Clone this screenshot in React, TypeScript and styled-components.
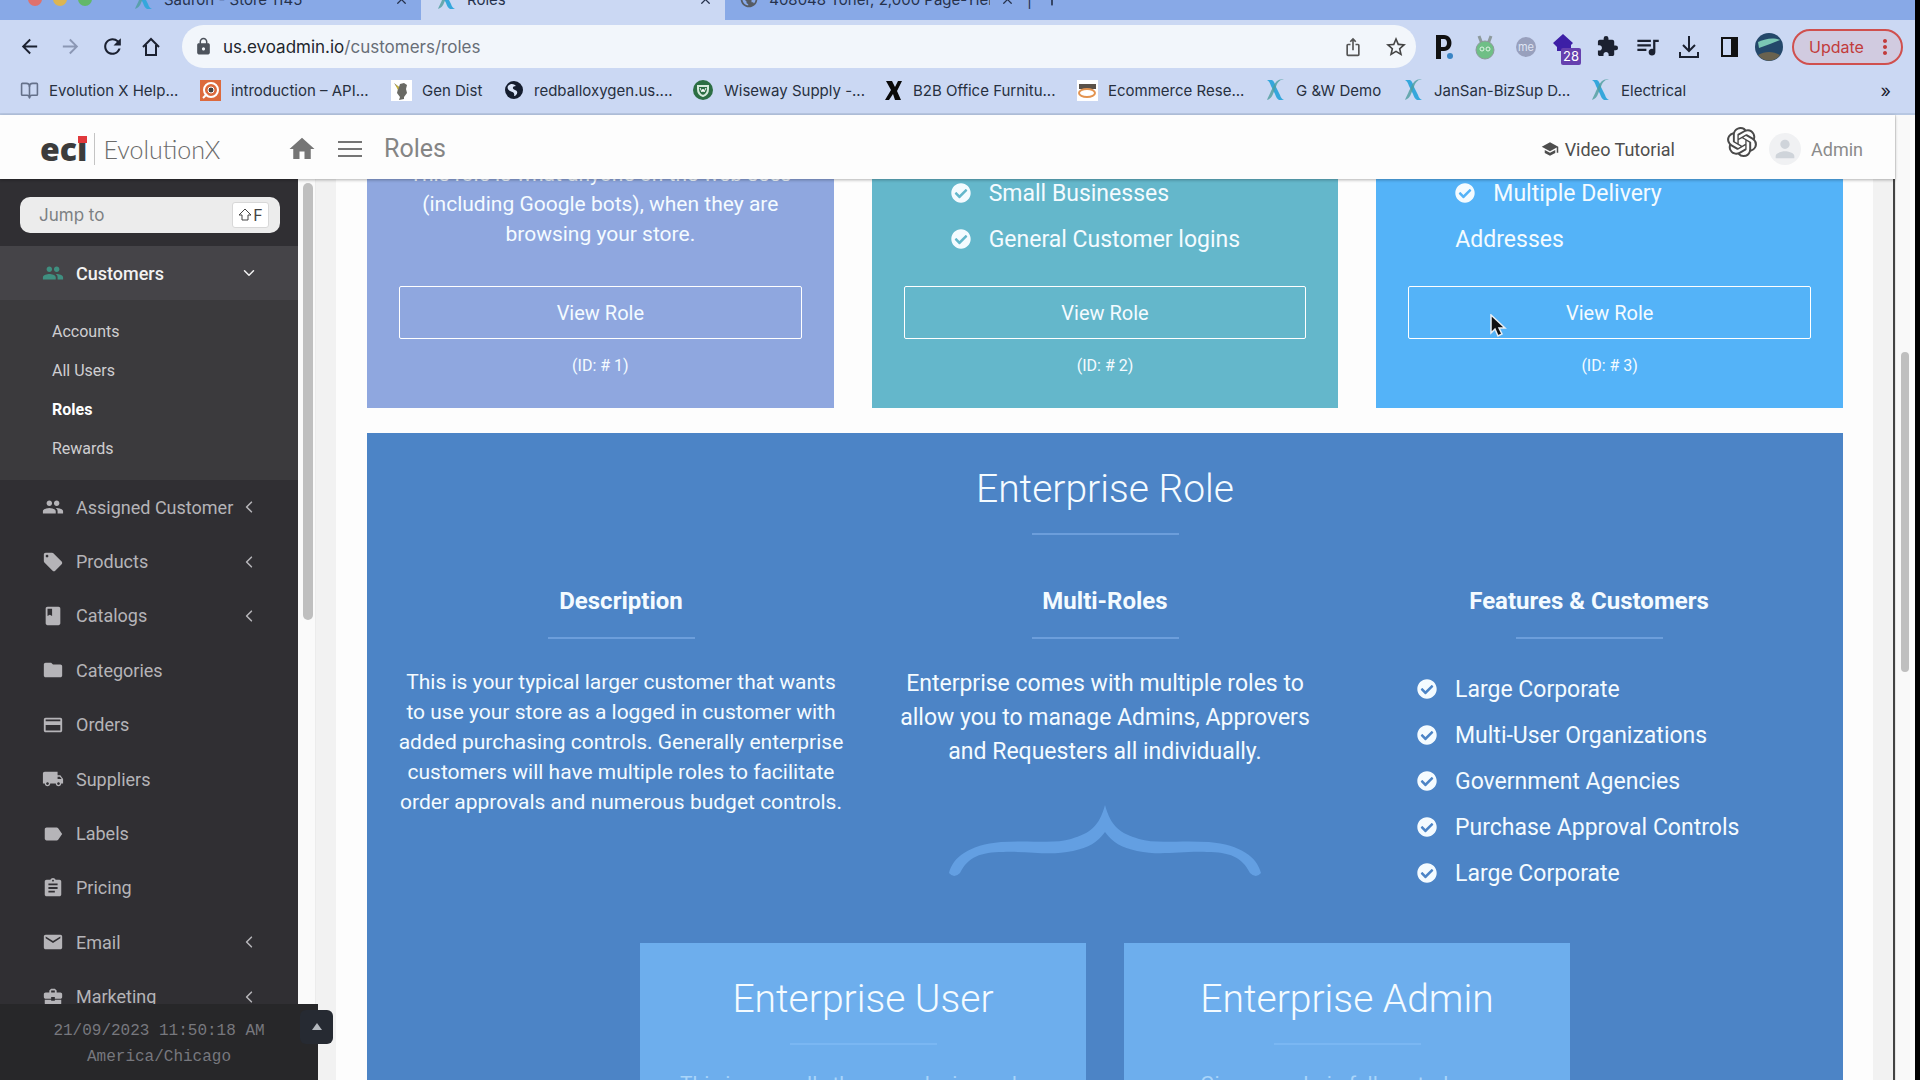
import React from "react";
import styled, { createGlobalStyle } from "styled-components";
import {
  MdArrowBack, MdArrowForward, MdRefresh, MdLock, MdIosShare, MdStarBorder,
  MdExtension, MdQueueMusic, MdMoreVert, MdHome, MdSchool, MdPeople,
  MdLocalOffer, MdClass, MdFolder, MdPayment, MdLocalShipping, MdLabel, MdAssignment, MdMail,
  MdBusinessCenter, MdPerson, MdPublic,
} from "react-icons/md";
import { FaCheckCircle } from "react-icons/fa";
import { SiOpenai } from "react-icons/si";
import { ChevronDown, ChevronLeft, BookOpen, X, Plus } from "lucide-react";

const Global = createGlobalStyle`
  * { box-sizing: border-box; }
  body { margin: 0; background: #000; }
  button, input { font-family: inherit; }
  a { color: inherit; text-decoration: none; }
  h1, h2, h3, p, ul { margin: 0; padding: 0; }
  ul { list-style: none; }
`;

const ui = `"Inter", "Liberation Sans", sans-serif`;
const body = `Roboto, "Noto Sans", sans-serif`;

const Screen = styled.div`
  height: 100vh;
  padding-right: 5px;
  display: flex;
  flex-direction: column;
  overflow: hidden;
  background: #000;
  font-family: ${body};
`;

/* Browser chrome */
const TabStrip = styled.div`
  height: 20px;
  flex: none;
  display: flex;
  align-items: flex-end;
  overflow: hidden;
  background: #88a9e7;
  font-family: ${ui};
`;
const Lights = styled.div`
  height: 42px;
  padding-left: 28px;
  width: 134px;
  display: flex;
  align-items: center;
  gap: 11px;
`;
const Light = styled.span<{ $c: string }>`
  width: 14px;
  height: 14px;
  border-radius: 50%;
  background: ${(p) => p.$c};
`;
const Tab = styled.div<{ $w: number; $active?: boolean }>`
  width: ${(p) => p.$w}px;
  height: 42px;
  padding: 0 12px 0 ${(p) => (p.$active ? 16 : 0)}px;
  display: flex;
  align-items: center;
  gap: 10px;
  font-size: 15px;
  color: #26324c;
  background: ${(p) => (p.$active ? "#cbd8f3" : "transparent")};
  span { flex: 1; white-space: nowrap; overflow: hidden; }
`;
const Toolbar = styled.div`
  height: 53px;
  flex: none;
  padding: 0 12px 0 18px;
  display: flex;
  align-items: center;
  background: #cbd8f3;
  font-family: ${ui};
`;
const IconButton = styled.button<{ $dim?: boolean; $w?: number }>`
  width: ${(p) => p.$w ?? 41}px;
  height: 36px;
  padding: 0;
  border: 0;
  display: flex;
  flex: none;
  align-items: center;
  justify-content: ${(p) => (p.$w ? "center" : "flex-start")};
  background: transparent;
  color: ${(p) => (p.$dim ? "#8b97b4" : "#1b2130")};
`;
const Address = styled.label`
  flex: 1;
  height: 43px;
  margin-right: 8px;
  padding: 0 2px 0 12px;
  display: flex;
  align-items: center;
  gap: 10px;
  border-radius: 22px;
  background: #f2f6fb;
  color: #4d535c;
`;
const Url = styled.a`
  flex: 1;
  font-size: 17px;
  color: #686e77;
  b { font-weight: 400; color: #22262d; }
`;
const Extensions = styled.div`
  display: flex;
  margin-right: 3px;
`;
const Update = styled.button`
  width: 111px;
  height: 36px;
  padding: 0 4px 0 15px;
  display: flex;
  align-items: center;
  justify-content: space-between;
  border: 2px solid #d0504e;
  border-radius: 18px;
  background: #d1cbe0;
  color: #c23b3b;
  font-size: 16px;
`;
const Bookmarks = styled.nav`
  height: 42px;
  flex: none;
  padding: 0 24px 6px 20px;
  display: flex;
  align-items: center;
  background: #cbd8f3;
  border-bottom: 2px solid #b7c7e2;
  font-family: ${ui};
  font-size: 15px;
  color: #27303f;
`;
const Bookmark = styled.a<{ $w: number }>`
  width: ${(p) => p.$w}px;
  flex: none;
  display: flex;
  align-items: center;
  gap: 10px;
  white-space: nowrap;
  svg { flex: none; }
`;
const More = styled.button`
  margin-left: auto;
  padding: 0;
  border: 0;
  background: none;
  font-size: 18px;
  color: #1b2130;
`;

/* Application */
const Viewport = styled.div`
  flex: 1;
  min-height: 0;
  display: grid;
  grid-template-columns: 1fr 20px;
`;
const Page = styled.div`
  min-width: 0;
  min-height: 0;
  display: grid;
  grid-template-rows: 64px 1fr;
  background: #fdfdfd;
`;
const PageTrack = styled.div`
  padding: 237px 6px 0 5px;
  background: #f9f9f9;
  border-left: 1px solid #e6e6e6;
`;
const Thumb = styled.div<{ $h: number }>`
  height: ${(p) => p.$h}px;
  border-radius: 5px;
  background: #bfbfbf;
`;
const Header = styled.header`
  display: flex;
  align-items: center;
  padding: 4px 32px 0 40px;
  box-shadow: 0 1px 3px rgba(0, 0, 0, 0.3);
  z-index: 1;
  color: #777;
`;
const Logo = styled.a`
  width: 247px;
  display: flex;
  align-items: center;
  color: #6b6b6b;
  font-family: Lato, sans-serif;
  font-size: 25px;
  font-weight: 300;
  line-height: 36px;
`;
const LogoMark = styled.strong`
  position: relative;
  margin-right: 8px;
  padding-right: 7px;
  border-right: 1px solid #c4c4c4;
  font-family: "Open Sans", sans-serif;
  font-size: 32px;
  font-weight: 800;
  line-height: 32px;
  color: #3c3c3c;
`;
const LogoDot = styled.i`
  position: absolute;
  right: 7px;
  top: 3px;
  width: 9px;
  height: 7px;
  background: #e0393c;
`;
const HeaderButton = styled.button<{ $w: number }>`
  width: ${(p) => p.$w}px;
  padding: 0;
  border: 0;
  background: none;
  color: #757575;
  display: flex;
`;
const PageTitle = styled.h1`
  flex: 1;
  font-size: 25px;
  line-height: 28px;
  font-weight: 400;
  color: #858585;
`;
const HeaderLink = styled.a`
  display: flex;
  align-items: center;
  gap: 6px;
  margin-right: 52px;
  font-size: 18px;
  color: #4e4e4e;
`;
const Assistant = styled.a`
  align-self: flex-start;
  height: 46px;
  display: flex;
  align-items: center;
  color: #4a4a4a;
`;
const Account = styled.a`
  display: flex;
  align-items: center;
  gap: 10px;
  margin-left: 12px;
  font-size: 18px;
  color: #8b8b8b;
`;
const Avatar = styled.span`
  width: 32px;
  height: 32px;
  display: flex;
  align-items: center;
  justify-content: center;
  border-radius: 50%;
  background: #f0f1f3;
  color: #cfd4da;
`;
const Columns = styled.div`
  min-height: 0;
  display: grid;
  grid-template-columns: 298px 18px 1fr;
`;
const Sidebar = styled.aside`
  position: relative;
  min-height: 0;
  display: flex;
  flex-direction: column;
  background: #302f33;
  color: #b5b4b8;
  font-size: 18px;
`;
const Jump = styled.label`
  height: 36px;
  margin: 18px 18px 13px 20px;
  padding: 0 11px 0 19px;
  display: flex;
  align-items: center;
  flex: none;
  border-radius: 10px;
  background: #ececec;
  font-family: ${ui};
  input {
    flex: 1;
    min-width: 0;
    padding: 0;
    border: 0;
    outline: 0;
    background: none;
    font-size: 17px;
  }
  input::placeholder { color: #7c8083; opacity: 1; }
  kbd {
    width: 37px;
    height: 26px;
    display: flex;
    align-items: center;
    justify-content: center;
    gap: 1px;
    border: 1px solid #d8d8d8;
    border-radius: 3px;
    background: #fff;
    font-family: inherit;
    font-size: 16px;
    color: #444;
  }
`;
const Item = styled.a<{ $open?: boolean }>`
  min-height: ${(p) => (p.$open ? 54 : 0)}px;
  padding: 0 40px 0 42px;
  display: flex;
  align-items: center;
  gap: 12px;
  background: ${(p) => (p.$open ? "#454448" : "transparent")};
  color: ${(p) => (p.$open ? "#f2f2f2" : "inherit")};
  font-weight: ${(p) => (p.$open ? 500 : 400)};
  > svg { flex: none; }
  > svg:first-child { color: ${(p) => (p.$open ? "#3f8f80" : "#b5b4b8")}; }
  span { flex: 1; min-width: 0; white-space: nowrap; }
`;
const SubMenu = styled.ul`
  padding: 12px 0 12px 52px;
  background: #3b3a3d;
`;
const SubItem = styled.li<{ $on?: boolean }>`
  font-size: 16px;
  line-height: 39px;
  font-weight: ${(p) => (p.$on ? 700 : 400)};
  color: ${(p) => (p.$on ? "#fff" : "#cfced1")};
`;
const Menu = styled.nav`
  flex: 1;
  min-height: 0;
  padding-bottom: 56px;
  display: grid;
  grid-auto-rows: 1fr;
  ${Item} { padding-right: 47px; }
`;
const Clock = styled.footer`
  position: absolute;
  left: 0;
  right: -20px;
  bottom: 0;
  height: 76px;
  padding: 14px 0;
  background: #272729;
  color: #77787e;
  font: 16px/26px "Liberation Mono", monospace;
  text-align: center;
  z-index: 2;
`;
const ClockToggle = styled.button`
  position: absolute;
  right: -15px;
  top: 6px;
  width: 33px;
  height: 34px;
  padding: 0;
  border: 0;
  border-radius: 6px;
  background: #262a32;
  color: #b4b8be;
`;
const SideTrack = styled.div`
  padding: 4px 2px 0 5px;
  background: #fafafa;
  border-right: 1px solid #ececec;
`;
const Main = styled.main`
  min-width: 0;
  min-height: 0;
  padding: 0 20px;
  overflow: hidden;
  background: #f2f2f2;
  border-right: 2px solid #444;
`;
const Sheet = styled.div`
  min-height: 100%;
  padding: 0 30px 0 31px;
  background: #fdfdfd;
  color: #f4fbff;
`;
const Cards = styled.div`
  height: 229px;
  margin-bottom: 25px;
  display: grid;
  grid-template-columns: repeat(3, 1fr);
  gap: 38px;
`;
const Card = styled.section<{ $bg: string }>`
  min-width: 0;
  padding: 0 32px 28px;
  display: flex;
  flex-direction: column;
  justify-content: flex-end;
  overflow: hidden;
  background: ${(p) => p.$bg};
`;
const Copy = styled.p<{ $big?: boolean }>`
  font-size: ${(p) => (p.$big ? 23 : 21)}px;
  line-height: ${(p) => (p.$big ? 34 : 30)}px;
  text-align: center;
  white-space: nowrap;
`;
const CardCopy = styled(Copy)`
  margin-bottom: 37px;
`;
const Ticks = styled.ul`
  font-size: 23px;
  line-height: 46px;
  margin: 0 0 23px 47px;
  svg { margin-right: 18px; vertical-align: -2px; }
`;
const ViewRole = styled.button`
  position: relative;
  height: 53px;
  flex: none;
  border: 1px solid #fff;
  border-radius: 2px;
  background: transparent;
  color: inherit;
  font-size: 20px;
`;
const Pointer = styled.svg`
  position: absolute;
  left: 80px;
  top: 27px;
`;
const RoleId = styled.p`
  margin-top: 13px;
  font-size: 16px;
  line-height: 28px;
  text-align: center;
`;
const Panel = styled.section`
  padding: 30px 12px 0;
  background: #4c84c6;
`;
const Title = styled.h2`
  font-size: 39px;
  font-weight: 300;
  line-height: 52px;
  text-align: center;
`;
const Rule = styled.hr<{ $c?: string }>`
  width: 147px;
  height: 2px;
  margin: 18px auto 0;
  border: 0;
  background: ${(p) => p.$c ?? "#6c9edb"};
`;
const Thirds = styled.div`
  height: 408px;
  padding-top: 48px;
  display: grid;
  grid-template-columns: repeat(3, 1fr);
`;
const Heading = styled.h3`
  font-size: 24px;
  font-weight: 700;
  line-height: 36px;
  text-align: center;
`;
const Body = styled.div`
  margin-top: 28px;
`;
const PanelTicks = styled(Ticks)`
  margin: 0 0 0 70px;
`;
const Brace = styled.svg`
  display: block;
  margin: 36px auto 0;
`;
const Roles = styled.div`
  padding: 0 261px;
  display: grid;
  grid-template-columns: 1fr 1fr;
  gap: 38px;
`;
const Role = styled.section`
  padding: 30px 0 0;
  background: #6daeed;
`;
const RoleCopy = styled.p`
  margin-top: 22px;
  font-size: 21px;
  line-height: 34px;
  text-align: center;
  color: #a9d5fa;
`;

const EvoX = () => (
  <svg width="20" height="24" viewBox="0 0 20 24" aria-hidden="true">
    <path d="M1 2h5c2 1 3 4 4 7l4 8c1 3 2 4 4 5h-5c-2-1-3-3-4-6L5 8C4 5 3 3 1 2z" fill="#35a7dc" />
    <path d="M18 1c-5 1-7 4-8 8l-3 7c-1 3-3 5-6 6 1-3 3-6 4-9l3-6c2-4 5-6 10-6z" fill="#4d9d9e" opacity=".8" />
  </svg>
);

const bookmarks: [string, React.ReactNode, number][] = [
  ["Evolution X Help...", <BookOpen size={19} color="#65718a" />, 180],
  ["introduction – API...", (
    <svg width="21" height="21" viewBox="0 0 21 21"><path d="M0 0h21v21H0z" fill="#dc6a3d" /><circle cx="11" cy="10" r="7" fill="none" stroke="#fff" strokeWidth="2" /><circle cx="11" cy="10" r="3" fill="#444" stroke="#fff" /><path d="M3 18l4-4" stroke="#fff" strokeWidth="2" /></svg>
  ), 191],
  ["Gen Dist", (
    <svg width="21" height="21" viewBox="0 0 21 21"><path d="M0 0h21v21H0z" fill="#fff" /><path d="M3 3l5 4 1-3 4-1 3 2-1 4 1 4-3 4v2l-5 1 1-3-3-4 1-4z" fill="#6a6a64" /><path d="M4 4l4 3-1 3z" fill="#c8b33a" /></svg>
  ), 113],
  ["redballoxygen.us....", (
    <svg width="20" height="20" viewBox="0 0 20 20"><circle cx="10" cy="10" r="9" fill="#151d2e" /><path d="M4 6c3-3 6-2 8 0-4 0-4 3-1 4 4 1 2 6-1 6 1-3-1-4-4-5-2-1-3-3-2-5z" fill="#dbe5f8" /></svg>
  ), 189],
  ["Wiseway Supply -...", (
    <svg width="21" height="21" viewBox="0 0 21 21"><circle cx="10" cy="10" r="10" fill="#2c6e43" /><path d="M5 6h10v3c0 3-2 6-5 7-3-1-5-4-5-7z" fill="none" stroke="#d6eadc" strokeWidth="2" /><path d="M7 8l2 4 1-3 1 3 2-4" fill="none" stroke="#fff" /></svg>
  ), 192],
  ["B2B Office Furnitu...", (
    <svg width="18" height="21" viewBox="0 0 18 21"><path d="M1 1h6l3 6 3-6h4l-5 10 4 9h-6l-2-6-4 6H0l6-10z" fill="#0a0a0a" /></svg>
  ), 192],
  ["Ecommerce Rese...", (
    <svg width="21" height="21" viewBox="0 0 21 21"><path d="M0 0h21v21H0z" fill="#fff" /><path d="M2 4h17v5H2z" fill="#5a5148" /><ellipse cx="10" cy="13" rx="8" ry="4" fill="none" stroke="#e3934f" strokeWidth="2" /></svg>
  ), 189],
  ["G &W Demo", <EvoX />, 138],
  ["JanSan-BizSup D...", <EvoX />, 187],
  ["Electrical", <EvoX />, 120],
];

const menu: [string, React.ReactNode, boolean][] = [
  ["Assigned Customer", <MdPeople size={22} />, true],
  ["Products", <MdLocalOffer size={22} />, true],
  ["Catalogs", <MdClass size={22} />, true],
  ["Categories", <MdFolder size={22} />, false],
  ["Orders", <MdPayment size={22} />, false],
  ["Suppliers", <MdLocalShipping size={22} />, false],
  ["Labels", <MdLabel size={22} />, false],
  ["Pricing", <MdAssignment size={22} />, false],
  ["Email", <MdMail size={22} />, true],
  ["Marketing", <MdBusinessCenter size={22} />, true],
];

const Tick = ({ children }: { children: React.ReactNode }) => (
  <li><FaCheckCircle size={20} />{children}</li>
);

export default function App() {
  return (
    <Screen>
      <Global />
      <TabStrip>
        <Lights><Light $c="#e0716c" /><Light $c="#dcb553" /><Light $c="#62b869" /></Lights>
        <Tab $w={287}><EvoX /><span>Sauron - Store 1145</span><X size={15} /></Tab>
        <Tab $w={304} $active><EvoX /><span>Roles</span><X size={15} /></Tab>
        <Tab $w={302}>&nbsp;<MdPublic size={20} color="#555b63" /><span>408048 Toner, 2,000 Page-Yield</span><X size={15} /></Tab>
        <Tab $w={60}>|<Plus size={20} /></Tab>
      </TabStrip>
      <Toolbar>
        <IconButton aria-label="Back"><MdArrowBack size={23} /></IconButton>
        <IconButton aria-label="Forward" $dim><MdArrowForward size={23} /></IconButton>
        <IconButton aria-label="Reload"><MdRefresh size={25} /></IconButton>
        <IconButton aria-label="Home">
          <svg width="20" height="22" viewBox="0 0 20 22" fill="none" stroke="currentColor" strokeWidth="2"><path d="M2 11l8-8 8 8M5 9v10h10V9" /></svg>
        </IconButton>
        <Address>
          <MdLock size={19} />
          <Url href="#"><b>us.evoadmin.io</b>/customers/roles</Url>
          <IconButton aria-label="Share" $w={30}><MdIosShare size={20} color="#555" /></IconButton>
          <IconButton aria-label="Bookmark" $w={36}><MdStarBorder size={24} color="#444" /></IconButton>
        </Address>
        <Extensions>
          <IconButton aria-label="P" $w={40}>
            <svg width="20" height="26" viewBox="0 0 20 26"><path d="M2 1h8c10 0 10 16 0 16H7v8H2zM7 5v8h3c4 0 4-8 0-8z" fill="#111" fillRule="evenodd" /><circle cx="16" cy="22" r="3" fill="#3a84c4" /></svg>
          </IconButton>
          <IconButton aria-label="Rabbit" $w={41}>
            <svg width="20" height="26" viewBox="0 0 20 26"><path d="M4 2l3 8M16 2l-3 8" stroke="#8d9a9c" strokeWidth="3" /><ellipse cx="10" cy="16" rx="9" ry="9" fill="#6fbf86" stroke="#8d9a9c" /><circle cx="7" cy="15" r="2" fill="none" stroke="#dff5e6" /><circle cx="13" cy="15" r="2" fill="none" stroke="#dff5e6" /></svg>
          </IconButton>
          <IconButton aria-label="me" $w={41}>
            <svg width="22" height="26" viewBox="0 0 22 26"><ellipse cx="11" cy="13" rx="10" ry="10" fill="#98a0bd" /><text x="11" y="17" textAnchor="middle" fontSize="11" fill="#dfe4f3">me</text></svg>
          </IconButton>
          <IconButton aria-label="28 notices" $w={41}>
            <svg width="30" height="36" viewBox="0 0 30 36"><path d="M11 5l10 9-2 2v6H5v-4l-4-4z" fill="#3d1fa6" /><rect x="9" y="19" width="20" height="17" rx="2" fill="#6640ae" /><text x="19" y="32" textAnchor="middle" fontSize="13" fill="#fff">28</text></svg>
          </IconButton>
          <IconButton aria-label="Extensions" $w={40}><MdExtension size={23} /></IconButton>
          <IconButton aria-label="Media" $w={41}><MdQueueMusic size={27} /></IconButton>
          <IconButton aria-label="Downloads" $w={41}>
            <svg width="22" height="24" viewBox="0 0 22 24" fill="none" stroke="currentColor" strokeWidth="2"><path d="M11 1v14M5 10l6 6 6-6M2 17v5h18v-5" /></svg>
          </IconButton>
          <IconButton aria-label="Side panel" $w={40}>
            <svg width="19" height="22" viewBox="0 0 19 22"><path d="M2 2h15v18H2z" fill="none" stroke="#111" strokeWidth="2" /><path d="M11 2h6v18h-6z" fill="#111" /></svg>
          </IconButton>
          <IconButton aria-label="Profile" $w={40}>
            <svg width="28" height="28" viewBox="0 0 28 28"><circle cx="14" cy="14" r="14" fill="#24486a" /><path d="M3 9c8-3 14-5 22-2l-10 4-11 4z" fill="#7bc7b4" /><path d="M3 22c7-4 15-4 22 0-5 7-16 8-22 0z" fill="#69624f" /></svg>
          </IconButton>
        </Extensions>
        <Update>Update<MdMoreVert size={24} /></Update>
      </Toolbar>
      <Bookmarks>
        {bookmarks.map(([label, icon, w]) => (
          <Bookmark key={label} href="#" $w={w}>{icon}{label}</Bookmark>
        ))}
        <More>»</More>
      </Bookmarks>

      <Viewport>
        <Page>
          <Header>
            <Logo href="#"><LogoMark>eci<LogoDot /></LogoMark>EvolutionX</Logo>
            <HeaderButton aria-label="Home" $w={51}><MdHome size={30} /></HeaderButton>
            <HeaderButton aria-label="Menu" $w={46}>
              <svg width="24" height="18" viewBox="0 0 24 18" stroke="currentColor" strokeWidth="2"><path d="M0 2h24M0 9h24M0 16h24" /></svg>
            </HeaderButton>
            <PageTitle>Roles</PageTitle>
            <HeaderLink href="#"><MdSchool size={18} />Video Tutorial</HeaderLink>
            <Assistant href="#" aria-label="Assistant"><SiOpenai size={30} /></Assistant>
            <Account href="#"><Avatar><MdPerson size={28} /></Avatar>Admin</Account>
          </Header>
          <Columns>
            <Sidebar>
              <Jump>
                <input placeholder="Jump to" aria-label="Jump to" />
                <kbd>
                  <svg width="14" height="14" viewBox="0 0 14 14" fill="none" stroke="#444"><path d="M7 1l6 6h-3v5H4V7H1z" /></svg>F
                </kbd>
              </Jump>
              <Item href="#" $open><MdPeople size={22} /><span>Customers</span><ChevronDown size={18} /></Item>
              <SubMenu>
                <SubItem><a href="#">Accounts</a></SubItem>
                <SubItem><a href="#">All Users</a></SubItem>
                <SubItem $on><a href="#">Roles</a></SubItem>
                <SubItem><a href="#">Rewards</a></SubItem>
              </SubMenu>
              <Menu>
                {menu.map(([label, icon, more]) => (
                  <Item key={label} href="#">{icon}<span>{label}</span>{more && <ChevronLeft size={8} viewBox="7 4 10 16" height={16} strokeWidth={2} />}</Item>
                ))}
              </Menu>
              <Clock>
                21/09/2023 11:50:18 AM<br />America/Chicago
                <ClockToggle aria-label="Expand">
                  <svg width="10" height="8" viewBox="0 0 10 8"><path d="M5 0l5 7H0z" fill="currentColor" /></svg>
                </ClockToggle>
              </Clock>
            </Sidebar>
            <SideTrack><Thumb $h={437} /></SideTrack>
            <Main>
              <Sheet>
                <Cards>
                  <Card $bg="#8fa7df">
                    <CardCopy>This role is what anyone on the web sees<br />(including Google bots), when they are<br />browsing your store.</CardCopy>
                    <ViewRole>View Role</ViewRole>
                    <RoleId>(ID: # 1)</RoleId>
                  </Card>
                  <Card $bg="#64b7cb">
                    <Ticks><Tick>Small Businesses</Tick><Tick>General Customer logins</Tick></Ticks>
                    <ViewRole>View Role</ViewRole>
                    <RoleId>(ID: # 2)</RoleId>
                  </Card>
                  <Card $bg="#54b3f8">
                    <Ticks><Tick>Multiple Delivery<br />Addresses</Tick></Ticks>
                    <ViewRole>
                      View Role
                      <Pointer width="18" height="24" viewBox="0 0 18 24"><path d="M2 1v18l4-4 3 7 4-2-3-6h6z" fill="#111" stroke="#e8eef4" strokeWidth="1.5" /></Pointer>
                    </ViewRole>
                    <RoleId>(ID: # 3)</RoleId>
                  </Card>
                </Cards>
                <Panel>
                  <Title>Enterprise Role</Title>
                  <Rule />
                  <Thirds>
                    <div>
                      <Heading>Description</Heading>
                      <Rule />
                      <Body>
                        <Copy>This is your typical larger customer that wants<br />to use your store as a logged in customer with<br />added purchasing controls. Generally enterprise<br />customers will have multiple roles to facilitate<br />order approvals and numerous budget controls.</Copy>
                      </Body>
                    </div>
                    <div>
                      <Heading>Multi-Roles</Heading>
                      <Rule />
                      <Body>
                        <Copy $big>Enterprise comes with multiple roles to<br />allow you to manage Admins, Approvers<br />and Requesters all individually.</Copy>
                      </Body>
                      <Brace width="312" height="72" viewBox="0 0 312 72">
                        <path d="M156 0C150 22 141 28 122 34C106 39 82 35 52 37C20 40 4 52 0 68Q5 74 11 68C19 52 32 47 54 47C82 46 100 51 124 46C140 42 148 38 156 27C164 38 172 42 188 46C212 51 230 46 258 47C280 47 293 52 301 68Q307 74 312 68C308 52 292 40 260 37C230 35 206 39 190 34C171 28 162 22 156 0z" fill="#639fe2" />
                      </Brace>
                    </div>
                    <div>
                      <Heading>Features &amp; Customers</Heading>
                      <Rule />
                      <Body>
                        <PanelTicks>
                          <Tick>Large Corporate</Tick>
                          <Tick>Multi-User Organizations</Tick>
                          <Tick>Government Agencies</Tick>
                          <Tick>Purchase Approval Controls</Tick>
                          <Tick>Large Corporate</Tick>
                        </PanelTicks>
                      </Body>
                    </div>
                  </Thirds>
                  <Roles>
                    <Role>
                      <Title>Enterprise User</Title>
                      <Rule $c="#7ab7f3" />
                      <RoleCopy>This is normally the user placing orders</RoleCopy>
                    </Role>
                    <Role>
                      <Title>Enterprise Admin</Title>
                      <Rule $c="#7ab7f3" />
                      <RoleCopy>Gives an admin full control over</RoleCopy>
                    </Role>
                  </Roles>
                </Panel>
              </Sheet>
            </Main>
          </Columns>
        </Page>
        <PageTrack><Thumb $h={320} /></PageTrack>
      </Viewport>
    </Screen>
  );
}
